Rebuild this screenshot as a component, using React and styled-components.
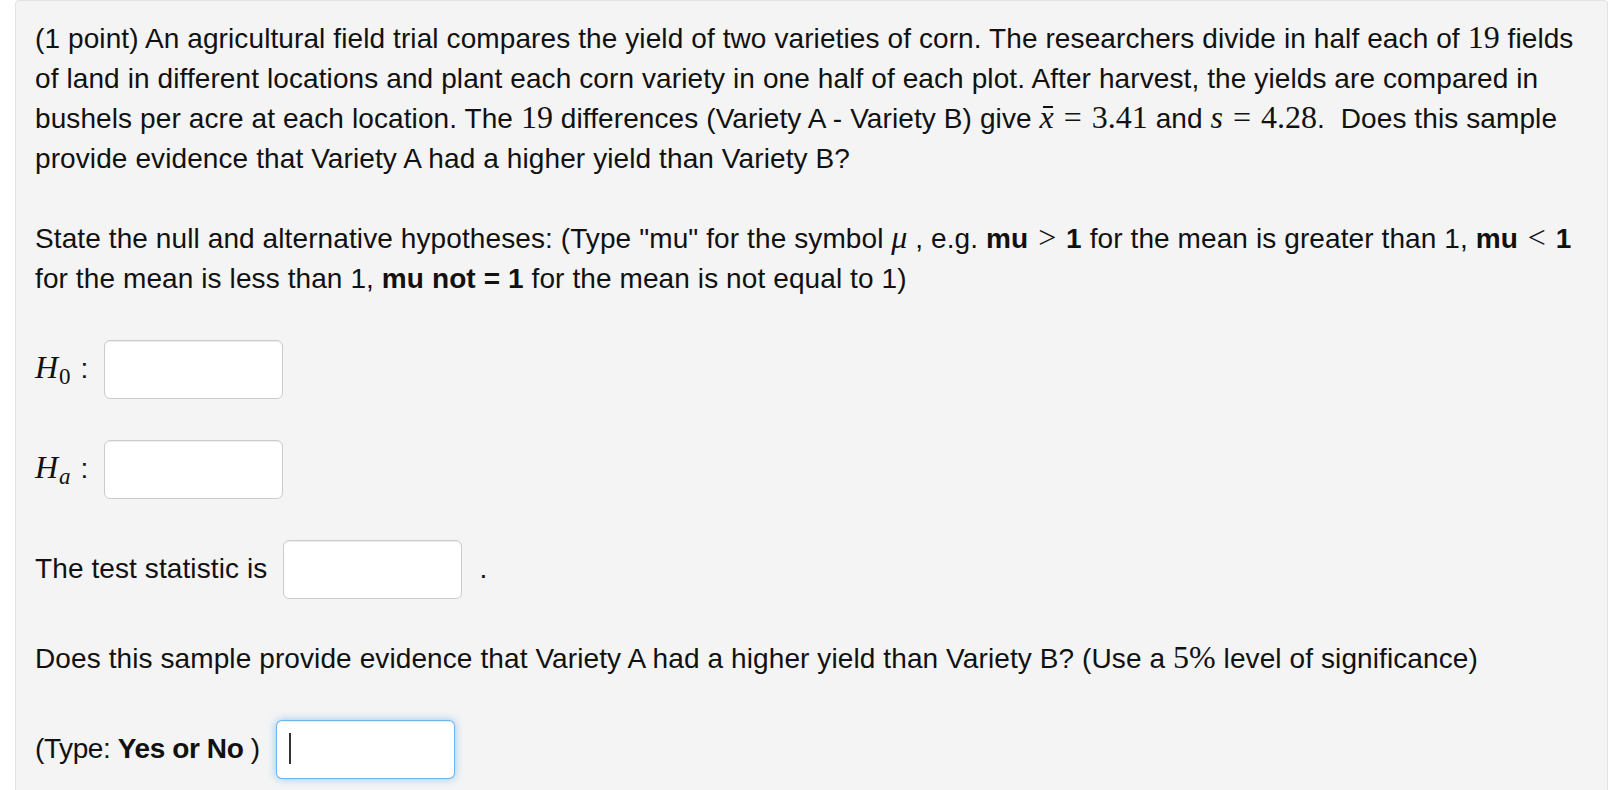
import React from "react";
import styled, { createGlobalStyle } from "styled-components";

const GlobalStyle = createGlobalStyle`
  body {
    margin: 0;
    background: #fff;
  }
`;

const Well = styled.div`
  margin: 0 14px 0 15px;
  padding: 18px 20px 20px 19px;
  background: #f4f4f4;
  border: 1px solid #e3e3e3;
  border-radius: 4px;
  font-family: "Liberation Sans", Arial, sans-serif;
  font-size: 28px;
  line-height: 40px;
  letter-spacing: 0.1px;
  color: #111;
  display: flex;
  flex-direction: column;
  gap: 40px;
`;

const Para = styled.p`
  margin: 0;
`;

const M = styled.span`
  font-family: "Liberation Serif", "DejaVu Serif", serif;
  font-size: 32px;
  line-height: 1;
  letter-spacing: 0;
  font-style: ${(p) => (p.$i ? "italic" : "normal")};
  font-weight: normal;
`;

const Rel = styled(M)`
  margin: 0 2px;
`;

const Bar = styled(M)`
  position: relative;
  &::before {
    content: "";
    position: absolute;
    left: 3px;
    right: 1px;
    top: 7px;
    height: 2px;
    background: currentColor;
  }
`;

const Sub = styled.span`
  font-family: "Liberation Serif", "DejaVu Serif", serif;
  font-size: 23px;
  line-height: 1;
  font-style: ${(p) => (p.$i ? "italic" : "normal")};
  position: relative;
  top: 6px;
  margin: 0 2px 0 1px;
`;

const Row = styled.div`
  display: flex;
  align-items: center;
  gap: 16px;
  height: 60px;
`;

const Label = styled.span`
  white-space: nowrap;
  letter-spacing: ${(p) => (p.$tight ? "-0.4px" : "inherit")};
`;

const Field = styled.span`
  position: relative;
  display: flex;
`;

const Input = styled.input`
  box-sizing: border-box;
  width: 179px;
  height: 59px;
  margin: 0;
  padding: 6px 12px;
  border: 1px solid ${(p) => (p.$focus ? "rgba(82, 168, 236, 0.85)" : "#ccc")};
  border-radius: 6px;
  background: #fff;
  font-family: "Liberation Sans", Arial, sans-serif;
  font-size: 28px;
  color: #333;
  caret-color: transparent;
  outline: none;
  box-shadow: ${(p) =>
    p.$focus
      ? "inset 0 1px 1px rgba(0,0,0,.075), 0 0 8px rgba(82,168,236,.6)"
      : "inset 0 1px 1px rgba(0,0,0,.075)"};
`;

const Caret = styled.span`
  position: absolute;
  left: 13px;
  top: 13px;
  width: 2px;
  height: 31px;
  background: #333;
`;

const Dot = styled.span`
  margin-left: 1px;
`;

const App = () => {
  return (
    <>
      <GlobalStyle />
      <Well>
        <Para>
          (1 point) An agricultural field trial compares the yield of two
          varieties of corn. The researchers divide in half each of{" "}
          <M>19</M> fields of land in different locations and plant each corn
          variety in one half of each plot. After harvest, the yields are
          compared in bushels per acre at each location. The <M>19</M>{" "}
          differences (Variety A - Variety B) give <Bar $i>x</Bar>
          <Rel> = </Rel>
          <M>3.41</M> and <M $i>s</M>
          <Rel> = </Rel>
          <M>4.28</M>.&nbsp; Does this sample provide evidence that Variety A
          had a higher yield than Variety B?
        </Para>
        <Para>
          State the null and alternative hypotheses: (Type "mu" for the symbol{" "}
          <M $i>μ</M> , e.g. <b>mu</b> <Rel>&gt;</Rel> <b>1</b> for the mean is
          greater than 1, <b>mu</b> <Rel>&lt;</Rel> <b>1</b> for the mean is
          less than 1, <b>mu not = 1</b> for the mean is not equal to 1)
        </Para>
        <Row>
          <Label>
            <M $i>H</M>
            <Sub>0</Sub> :
          </Label>
          <Field>
            <Input type="text" />
          </Field>
        </Row>
        <Row>
          <Label>
            <M $i>H</M>
            <Sub $i>a</Sub> :
          </Label>
          <Field>
            <Input type="text" />
          </Field>
        </Row>
        <Row>
          <Label>The test statistic is</Label>
          <Field>
            <Input type="text" />
          </Field>
          <Dot>.</Dot>
        </Row>
        <Para>
          Does this sample provide evidence that Variety A had a higher yield
          than Variety B? (Use a <M>5%</M> level of significance)
        </Para>
        <Row>
          <Label $tight>
            (Type: <b>Yes or No</b> )
          </Label>
          <Field>
            <Input type="text" $focus />
            <Caret />
          </Field>
        </Row>
      </Well>
    </>
  );
};

export default App;
